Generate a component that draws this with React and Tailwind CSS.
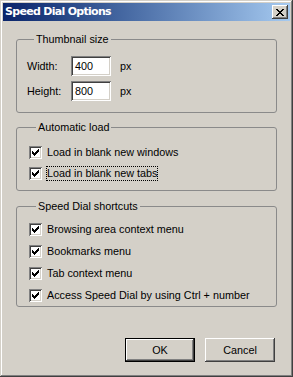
import React from "react";

const raised =
  "shadow-[inset_-1px_-1px_#404040,inset_1px_1px_#ffffff,inset_-2px_-2px_#808080,inset_2px_2px_#d4d0c8]";
const sunken =
  "shadow-[inset_1px_1px_#808080,inset_-1px_-1px_#ffffff,inset_2px_2px_#404040,inset_-2px_-2px_#d4d0c8]";

const Check = ({ label, focused = false }) => (
  <label className="flex items-center gap-[4px] h-[13px]">
    <span className={`w-[13px] h-[13px] bg-white ${sunken} flex items-center justify-center shrink-0`}>
      <svg width="7" height="7" viewBox="0 0 7 7" shapeRendering="crispEdges">
        <path d="M0 2h1v3H0zM1 3h1v3H1zM2 4h1v3H2zM3 3h1v3H3zM4 2h1v3H4zM5 1h1v3H5zM6 0h1v3H6z" fill="#000" />
      </svg>
    </span>
    <span
      className={`px-[1px] leading-[15px] ${
        focused ? "outline outline-1 outline-dotted outline-black -outline-offset-1" : ""
      }`}
    >
      {label}
    </span>
  </label>
);

const Group = ({ title, className = "", children }) => (
  <fieldset className={`border border-[#8a8a8a] rounded-[3px] ${className}`}>
    <legend className="ml-[7px] px-[2px] leading-[13px]">{title}</legend>
    {children}
  </fieldset>
);

const SizeRow = ({ label, value }) => (
  <div className="flex items-center h-[20px]">
    <span className="w-[44px]">{label}</span>
    <div className={`w-[40px] h-[20px] bg-white ${sunken} flex items-center pl-[4px]`}>{value}</div>
    <span className="ml-[9px]">px</span>
  </div>
);

export default function App() {
  return (
    <div
      className={`w-[293px] h-[377px] bg-[#d4d0c8] p-[3px] flex flex-col text-[10.8px] text-black shadow-[inset_-1px_-1px_#404040,inset_1px_1px_#d4d0c8,inset_-2px_-2px_#808080,inset_2px_2px_#ffffff]`}
      style={{ fontFamily: '"Liberation Sans", Arial, sans-serif' }}
    >
      {/* title bar */}
      <div className="h-[18px] flex items-center justify-between pl-[2px] pr-[2px] bg-gradient-to-r from-[#0a246a] to-[#a6caf0]">
        <span
          className="text-white font-bold text-[11px] leading-[18px] tracking-[-0.7px]"
          style={{ fontFamily: '"DejaVu Sans", Verdana, sans-serif' }}
        >
          Speed Dial Options
        </span>
        <button className={`w-[16px] h-[14px] bg-[#d4d0c8] ${raised} flex items-center justify-center`}>
          <svg width="8" height="7" viewBox="0 0 8 7" shapeRendering="crispEdges">
            <path
              d="M0 0h2v1H0zM6 0h2v1H6zM1 1h2v1H1zM5 1h2v1H5zM2 2h4v1H2zM3 3h2v1H3zM2 4h4v1H2zM1 5h2v1H1zM5 5h2v1H5zM0 6h2v1H0zM6 6h2v1H6z"
              fill="#000"
            />
          </svg>
        </button>
      </div>

      {/* body */}
      <div className="flex-1 flex flex-col px-[13px] pt-[12px]">
        <Group title="Thumbnail size" className="pl-[10px] pt-[10px] pb-[11px] flex flex-col gap-[5px]">
          <SizeRow label="Width:" value="400" />
          <SizeRow label="Height:" value="800" />
        </Group>

        <Group title="Automatic load" className="mt-[8px] pl-[12px] pt-[12px] pb-[10px] flex flex-col gap-[8px]">
          <Check label="Load in blank new windows" />
          <Check label="Load in blank new tabs" focused />
        </Group>

        <Group title="Speed Dial shortcuts" className="mt-[9px] pl-[12px] pt-[10px] pb-[4px] flex flex-col gap-[9px]">
          <Check label="Browsing area context menu" />
          <Check label="Bookmarks menu" />
          <Check label="Tab context menu" />
          <Check label="Access Speed Dial by using Ctrl + number" />
        </Group>

        <div className="mt-auto mb-[12px] flex justify-end gap-[10px] pr-[2px]">
          <button className={`w-[70px] h-[24px] bg-[#d4d0c8] border border-black ${raised}`}>OK</button>
          <button className={`w-[70px] h-[24px] bg-[#d4d0c8] ${raised}`}>Cancel</button>
        </div>
      </div>
    </div>
  );
}
